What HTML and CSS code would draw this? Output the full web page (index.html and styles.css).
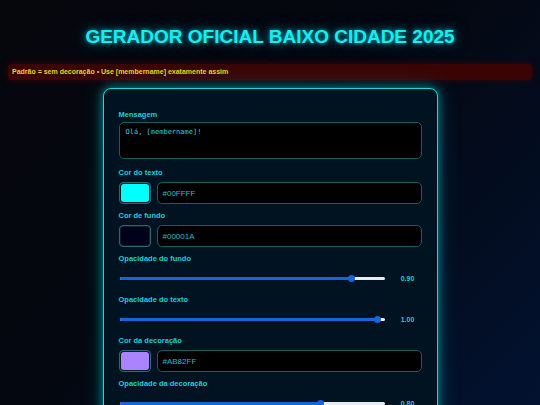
FILE: index.html
```html
<!DOCTYPE html>
<html lang="pt">
<head>
<meta charset="utf-8">
<title>Gerador Oficial Baixo Cidade 2025</title>
<link rel="stylesheet" href="styles.css">
</head>
<body>
<h1 class="title">GERADOR OFICIAL BAIXO CIDADE 2025</h1>
<div class="notice">Padrão = sem decoração • Use [membername] exatamente assim</div>
<div class="card">
  <div class="field">
    <label class="label">Mensagem</label>
    <div class="textarea">Olá, [membername]!</div>
  </div>
  <div class="field">
    <label class="label">Cor do texto</label>
    <div class="color-row">
      <div class="swatch"><span class="swatch-fill sw-cyan"></span></div>
      <div class="text-input">#00FFFF</div>
    </div>
  </div>
  <div class="field">
    <label class="label">Cor de fundo</label>
    <div class="color-row">
      <div class="swatch"><span class="swatch-fill sw-navy"></span></div>
      <div class="text-input">#00001A</div>
    </div>
  </div>
  <div class="field">
    <label class="label">Opacidade do fundo</label>
    <div class="range-row">
      <div class="range"><div class="range-fill" style="width:87.6%"></div><div class="range-thumb" style="left:87.6%"></div></div>
      <span class="range-value">0.90</span>
    </div>
  </div>
  <div class="field">
    <label class="label">Opacidade do texto</label>
    <div class="range-row">
      <div class="range"><div class="range-fill" style="width:97.5%"></div><div class="range-thumb" style="left:97.5%"></div></div>
      <span class="range-value">1.00</span>
    </div>
  </div>
  <div class="field">
    <label class="label">Cor da decoração</label>
    <div class="color-row">
      <div class="swatch"><span class="swatch-fill sw-purple"></span></div>
      <div class="text-input">#AB82FF</div>
    </div>
  </div>
  <div class="field">
    <label class="label">Opacidade da decoração</label>
    <div class="range-row">
      <div class="range"><div class="range-fill" style="width:76%"></div><div class="range-thumb" style="left:76%"></div></div>
      <span class="range-value">0.80</span>
    </div>
  </div>
</div>
</body>
</html>
```
FILE: styles.css
```css
html, body {
  margin: 0;
  height: 100%;
}
body {
  padding: 8px;
  box-sizing: border-box;
  overflow: hidden;
  font-family: "Liberation Sans", Arial, sans-serif;
  background: linear-gradient(135deg, #06070d 0%, #04070f 45%, #021230 100%);
  color: #19d3d9;
}
.title {
  margin: 17px 0 15px;
  font-size: 19px;
  line-height: 24px;
  font-weight: bold;
  text-align: center;
  color: #14eef2;
  text-shadow: 0 0 4px rgba(0, 255, 255, 0.6), 0 0 12px rgba(0, 220, 255, 0.45), 0 0 20px rgba(0, 200, 255, 0.25);
}
.notice {
  background: #3a0404;
  border-radius: 4px;
  padding: 4px 4px;
  font-size: 7px;
  line-height: 8px;
  font-weight: bold;
  color: #e6d21a;
  box-shadow: 0 0 6px rgba(90, 0, 0, 0.6);
}
.card {
  width: 335px;
  box-sizing: border-box;
  margin: 8px auto 0;
  padding: 21px 15px 20px;
  background: #011221;
  border: 1.5px solid #12dde3;
  border-radius: 8px;
  box-shadow: 0 0 10px rgba(0, 230, 240, 0.55), 0 0 22px rgba(0, 200, 220, 0.25);
  display: flex;
  flex-direction: column;
  gap: 7px;
}
.field {
  display: flex;
  flex-direction: column;
  gap: 4px;
}
.label {
  font-size: 7.5px;
  line-height: 10px;
  font-weight: bold;
  color: #19cfd6;
}
.textarea {
  height: 37px;
  box-sizing: border-box;
  margin-top: -2px;
  margin-bottom: 2px;
  background: #000;
  border: 1px solid #1b5a60;
  border-radius: 5px;
  padding: 4px 6px;
  font-family: "DejaVu Sans Mono", "Liberation Mono", monospace;
  font-size: 7px;
  line-height: 10px;
  color: #2fd0d4;
}
.color-row {
  display: flex;
  gap: 6px;
  height: 22px;
}
.swatch {
  width: 32px;
  box-sizing: border-box;
  border: 1px solid #2a6a70;
  border-radius: 4px;
  padding: 1px;
  display: flex;
  background: #062028;
}
.swatch-fill {
  flex: 1;
  border-radius: 3px;
}
.sw-cyan { background: #00ffff; }
.sw-navy { background: #00001a; }
.sw-purple { background: #ab82ff; }
.text-input {
  flex: 1;
  box-sizing: border-box;
  background: #000;
  border: 1px solid #1b5a60;
  border-radius: 5px;
  padding: 0 5px;
  display: flex;
  align-items: center;
  font-size: 8px;
  color: #2bbcc1;
}
.range-row {
  display: flex;
  align-items: center;
  gap: 8px;
  height: 20px;
}
.range {
  position: relative;
  flex: 1;
  height: 3px;
  margin: 0 1px;
  background: #e8eaee;
  border-radius: 2px;
}
.range-fill {
  position: absolute;
  left: 0;
  top: 0;
  bottom: 0;
  background: #1666d9;
  border-radius: 2px;
}
.range-thumb {
  position: absolute;
  top: 50%;
  width: 7px;
  height: 7px;
  margin: -3.5px 0 0 -3.5px;
  border-radius: 50%;
  background: #1666d9;
}
.range-value {
  width: 28px;
  text-align: center;
  font-size: 7px;
  font-weight: bold;
  color: #19cfd6;
}
```
